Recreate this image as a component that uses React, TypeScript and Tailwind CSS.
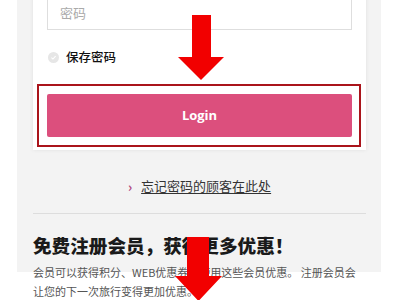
import React from 'react';

function DownArrow({ x1, x2, top, headY, hx1, hx2, tipY }: { x1: number; x2: number; top: number; headY: number; hx1: number; hx2: number; tipY: number }) {
  const tipX = (hx1 + hx2) / 2;
  return (
    <polygon
      points={`${x1},${top} ${x2},${top} ${x2},${headY} ${hx2},${headY} ${tipX},${tipY} ${hx1},${headY} ${x1},${headY}`}
      fill="#f20000"
    />
  );
}

export default function App() {
  return (
    <div
      className="relative w-[400px] h-[300px] overflow-hidden bg-white"
      style={{ fontFamily: '"Noto Sans CJK SC", "Noto Sans", sans-serif' }}
    >
      <div className="ml-[17px] w-[364px] h-full bg-[#f3f3f3] pl-[16px] pr-[15px]">
        {/* Login card */}
        <div className="relative -mt-[28px] bg-white px-[14px] pt-[14px] pb-[13px] shadow-[0_0_4px_rgba(0,0,0,0.08)]">
          <div className="h-[44px] border border-[#dedede] bg-white flex items-center px-[12px] pt-[10px]">
            <span className="text-[13px] text-[#aaaaaa]">密码</span>
          </div>

          <label className="mt-[17px] flex items-center h-[20px] gap-[7px] pl-[1px]">
            <span className="w-[11px] h-[11px] rounded-full bg-[#e6e6e6] flex items-center justify-center">
              <svg viewBox="0 0 10 10" className="w-[7px] h-[7px]">
                <path d="M2 5.2 L4.2 7.2 L8 3" stroke="#ffffff" strokeWidth="1.6" fill="none" />
              </svg>
            </span>
            <span className="text-[12.5px] text-[#111111] font-medium">保存密码</span>
          </label>

          <button
            className="mt-[27px] w-full h-[43px] rounded-[2px] bg-[#dc4f7d] text-white text-[13px] font-bold"
            style={{ fontFamily: '"Open Sans", sans-serif' }}
          >
            Login
          </button>

          {/* annotation frame */}
          <div className="absolute left-[4px] right-[5px] top-[112px] h-[63px] border-2 border-[#aa141b] pointer-events-none" />
        </div>

        {/* forgot password */}
        <div className="mt-[26px] h-[20px] flex items-center justify-center gap-[9px]">
          <span className="text-[13px] text-[#b0457a] font-bold leading-none">›</span>
          <a className="text-[13px] text-[#333333] underline underline-offset-2">忘记密码的顾客在此处</a>
        </div>

        <div className="mt-[17px] h-px bg-[#dddddd]" />

        <h2 className="mt-[18px] text-[18.6px] leading-[26px] font-black text-[#1a1a1a]">免费注册会员，获得更多优惠！</h2>
        <p className="mt-[5px] text-[11px] leading-[19px] text-[#555555]">
          会员可以获得积分、WEB优惠券，使用这些会员优惠。 注册会员会让您的下一次旅行变得更加优惠。
        </p>
      </div>

      {/* arrows */}
      <svg className="absolute left-0 top-0 pointer-events-none" width="400" height="300" viewBox="0 0 400 300">
        <DownArrow x1={192} x2={211} top={15} headY={57} hx1={178} hx2={224} tipY={80} />
        <DownArrow x1={187} x2={209} top={237} headY={276} hx1={175} hx2={222} tipY={301} />
      </svg>
    </div>
  );
}
